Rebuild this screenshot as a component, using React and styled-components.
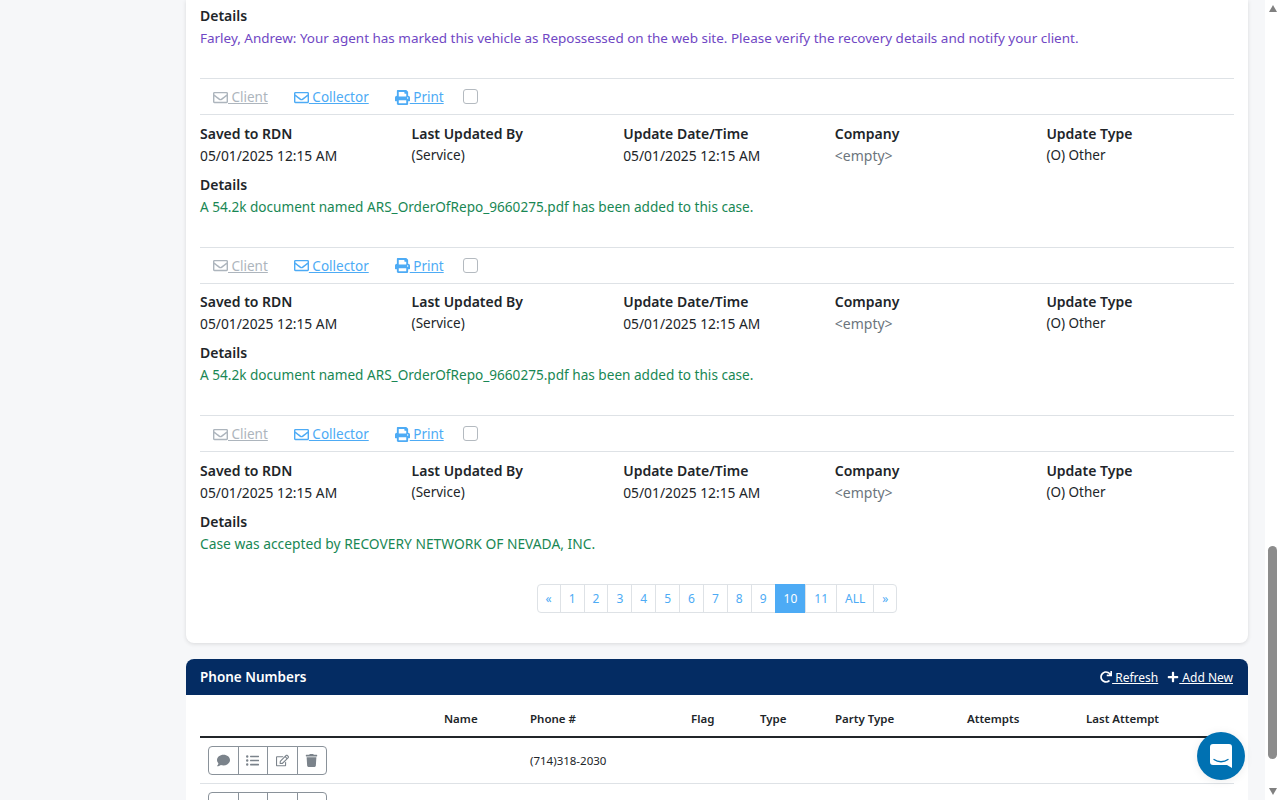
import styled, { createGlobalStyle } from "styled-components";
import {
  FaRegEnvelope,
  FaPrint,
  FaComment,
  FaListUl,
  FaRegEdit,
  FaTrash,
  FaRedo,
  FaPlus,
} from "react-icons/fa";

const GlobalStyle = createGlobalStyle`
  html, body {
    margin: 0;
    height: 100%;
    overflow: hidden;
    background: #f6f7f9;
    font-family: "Noto Sans", "Open Sans", sans-serif;
    font-size: 13.5px;
    color: #212529;
  }
`;

const Page = styled.div`
  display: flex;
  height: 800px;
  overflow: hidden;
`;

const Main = styled.main`
  width: 1062px;
  margin-left: 186px;
`;

const Card = styled.section`
  background: #fff;
  border-radius: 0 0 8px 8px;
  box-shadow: 0 1px 4px rgba(0, 0, 0, 0.12);
  padding: 0 14px;
  height: 643px;
  box-sizing: border-box;
`;

const Note = styled.div`
  height: ${(p) => p.$height}px;
  box-sizing: border-box;
`;

const Label = styled.div`
  font-size: 14px;
  font-weight: 600;
  line-height: 20px;
  margin-bottom: 1px;
`;

const Detail = styled.div`
  line-height: ${(p) => p.$lead || 21}px;
  font-size: ${(p) => p.$size || 13.5}px;
  color: ${(p) => p.$color};
`;

const DetailBlock = styled.div`
  padding-top: ${(p) => p.$top}px;
`;

const Actions = styled.div`
  display: flex;
  align-items: center;
  height: 35px;
  border-top: 1px solid #dee2e6;
  border-bottom: 1px solid #dee2e6;
  padding-left: 13px;
`;

const ActionLink = styled.a`
  display: inline-flex;
  align-items: center;
  padding-top: 1px;
  color: ${(p) => (p.$muted ? "#adb5bd" : "#4dabf5")};
  text-decoration: underline;
  margin-right: ${(p) => p.$gap}px;
  white-space: pre;
  svg {
    font-size: 15px;
  }
`;

const Check = styled.span`
  width: 15px;
  height: 15px;
  box-sizing: border-box;
  border: 1px solid #b4bac0;
  border-radius: 3px;
`;

const Fields = styled.div`
  display: grid;
  grid-template-columns: repeat(5, 211.6px);
  padding-top: 8.5px;
`;

const Muted = styled.div`
  line-height: 21px;
  font-size: 14px;
  color: #6c757d;
`;

const Pager = styled.nav`
  display: flex;
  justify-content: center;
  padding-left: 1px;
`;

const PageItem = styled.a`
  height: 29px;
  box-sizing: border-box;
  padding: 0 8px;
  display: flex;
  align-items: center;
  font-size: 12px;
  border: 1px solid #dee2e6;
  margin-left: -1px;
  color: ${(p) => (p.$active ? "#fff" : "#4dabf5")};
  background: ${(p) => (p.$active ? "#4dabf5" : "#fff")};
  border-color: ${(p) => (p.$active ? "#4dabf5" : "#dee2e6")};
  &:first-child {
    border-radius: 4px 0 0 4px;
  }
  &:last-child {
    border-radius: 0 4px 4px 0;
  }
`;

const Panel = styled.section`
  margin-top: 16px;
  background: #fff;
  border-radius: 8px 8px 0 0;
`;

const PanelHead = styled.header`
  height: 36px;
  background: #042c63;
  color: #fff;
  border-radius: 8px 8px 0 0;
  display: flex;
  align-items: center;
  justify-content: space-between;
  padding: 0 15px 0 14px;
`;

const PanelTitle = styled.h2`
  margin: 0;
  font-size: 13.5px;
  font-weight: 600;
`;

const HeadLinks = styled.div`
  display: flex;
  gap: 9px;
`;

const HeadLink = styled.a`
  display: inline-flex;
  align-items: center;
  color: #fff;
  text-decoration: underline;
  white-space: pre;
  font-size: 12px;
  svg {
    font-size: 12px;
  }
`;

const TableWrap = styled.div`
  padding: 0 14px;
`;

const Table = styled.table`
  width: 1034px;
  border-collapse: collapse;
  table-layout: fixed;
  font-size: 11.5px;
  th {
    height: 42px;
    text-align: left;
    font-weight: 600;
    padding: 5px 0 0;
    box-sizing: border-box;
    border-bottom: 2px solid #212529;
  }
  td {
    height: 45px;
    padding: 0;
    border-bottom: 1px solid #dee2e6;
  }
`;

const BtnGroup = styled.div`
  display: inline-flex;
  margin-left: 8px;
  vertical-align: middle;
`;

const IconBtn = styled.button`
  width: 30.5px;
  height: 29px;
  padding: 0;
  background: #fff;
  border: 1px solid #8a929a;
  margin-left: -1px;
  color: #7b838b;
  display: flex;
  align-items: center;
  justify-content: center;
  font-size: 13px;
  &:first-child {
    border-radius: 4px 0 0 4px;
    margin-left: 0;
  }
  &:last-child {
    border-radius: 0 4px 4px 0;
  }
`;

const ScrollBar = styled.aside`
  width: 15px;
  margin-left: 17px;
  background: #fff;
  display: flex;
  flex-direction: column;
  align-items: center;
  height: 800px;
`;

const Arrow = styled.span`
  width: 0;
  height: 0;
  margin: 5px 0;
  border-left: 4.5px solid transparent;
  border-right: 4.5px solid transparent;
  border-${(p) => (p.$up ? "bottom" : "top")}: 7px solid #808080;
`;

const Track = styled.div`
  flex: 1;
  width: 100%;
  display: flex;
  flex-direction: column;
  justify-content: flex-end;
  align-items: center;
`;

const Thumb = styled.div`
  width: 9px;
  height: 213px;
  background: #8c8c8c;
  border-radius: 5px;
  margin-bottom: 24px;
`;

const Launcher = styled.div`
  position: fixed;
  left: 1197px;
  top: 732px;
  width: 48px;
  height: 48px;
  border-radius: 50%;
  background: #0071b2;
  box-shadow: 0 1px 10px rgba(0, 0, 0, 0.08);
  display: flex;
  align-items: center;
  justify-content: center;
`;

const notes = [
  { text: "A 54.2k document named ARS_OrderOfRepo_9660275.pdf has been added to this case.", size: 13.6 },
  { text: "A 54.2k document named ARS_OrderOfRepo_9660275.pdf has been added to this case.", size: 13.6 },
  { text: "Case was accepted by RECOVERY NETWORK OF NEVADA, INC.", size: 13.8 },
];

const columns = ["Name", "Phone #", "Flag", "Type", "Party Type", "Attempts", "Last Attempt"];

function NoteRow({ text, size }) {
  return (
    <Note $height={168.5}>
      <Actions>
        <ActionLink $muted $gap={26}>
          <FaRegEnvelope /> Client
        </ActionLink>
        <ActionLink $gap={26}>
          <FaRegEnvelope /> Collector
        </ActionLink>
        <ActionLink $gap={19}>
          <FaPrint /> Print
        </ActionLink>
        <Check />
      </Actions>
      <Fields>
        <div>
          <Label>Saved to RDN</Label>
          <Detail $size={13.8}>05/01/2025 12:15 AM</Detail>
        </div>
        <div>
          <Label>Last Updated By</Label>
          <Detail>(Service)</Detail>
        </div>
        <div>
          <Label>Update Date/Time</Label>
          <Detail $size={13.8}>05/01/2025 12:15 AM</Detail>
        </div>
        <div>
          <Label>Company</Label>
          <Muted>&lt;empty&gt;</Muted>
        </div>
        <div>
          <Label>Update Type</Label>
          <Detail>(O) Other</Detail>
        </div>
      </Fields>
      <DetailBlock $top={9}>
        <Label>Details</Label>
        <Detail $color="#198754" $size={size}>{text}</Detail>
      </DetailBlock>
    </Note>
  );
}

function ButtonRow() {
  return (
    <BtnGroup>
      <IconBtn><FaComment /></IconBtn>
      <IconBtn><FaListUl /></IconBtn>
      <IconBtn><FaRegEdit /></IconBtn>
      <IconBtn><FaTrash /></IconBtn>
    </BtnGroup>
  );
}

export default function App() {
  return (
    <Page>
      <GlobalStyle />
      <Main>
        <Card>
          <Note $height={78}>
            <DetailBlock $top={6}>
              <Label>Details</Label>
              <Detail $color="#7047c4" $size={13.47} $lead={23}>
                Farley, Andrew: Your agent has marked this vehicle as Repossessed on the web site. Please verify the recovery details and notify your client.
              </Detail>
            </DetailBlock>
          </Note>
          {notes.map((n, i) => (
            <NoteRow key={i} text={n.text} size={n.size} />
          ))}
          <Pager>
            <PageItem>«</PageItem>
            {[1, 2, 3, 4, 5, 6, 7, 8, 9].map((n) => (
              <PageItem key={n}>{n}</PageItem>
            ))}
            <PageItem $active>10</PageItem>
            <PageItem>11</PageItem>
            <PageItem>ALL</PageItem>
            <PageItem>»</PageItem>
          </Pager>
        </Card>
        <Panel>
          <PanelHead>
            <PanelTitle>Phone Numbers</PanelTitle>
            <HeadLinks>
              <HeadLink><FaRedo /> Refresh</HeadLink>
              <HeadLink><FaPlus /> Add New</HeadLink>
            </HeadLinks>
          </PanelHead>
          <TableWrap>
            <Table>
              <colgroup>
                <col width="244" />
                <col width="86" />
                <col width="161" />
                <col width="69" />
                <col width="75" />
                <col width="132" />
                <col width="119" />
                <col width="148" />
              </colgroup>
              <thead>
                <tr>
                  <th />
                  {columns.map((c) => (
                    <th key={c}>{c}</th>
                  ))}
                </tr>
              </thead>
              <tbody>
                <tr>
                  <td><ButtonRow /></td>
                  <td />
                  <td>(714)318-2030</td>
                  <td /><td /><td /><td /><td />
                </tr>
                <tr>
                  <td><ButtonRow /></td>
                  <td /><td /><td /><td /><td /><td /><td />
                </tr>
              </tbody>
            </Table>
          </TableWrap>
        </Panel>
      </Main>
      <ScrollBar>
        <Arrow $up />
        <Track>
          <Thumb />
        </Track>
        <Arrow />
      </ScrollBar>
      <Launcher>
        <svg width="22" height="24" viewBox="0 0 22 24">
          <path d="M3 0h16a3 3 0 0 1 3 3v21l-5-3H3a3 3 0 0 1-3-3V3a3 3 0 0 1 3-3z" fill="#fff" />
          <path d="M4 15.5c4 3 10 3 14 0" fill="none" stroke="#0071b2" strokeWidth="1.3" strokeLinecap="round" />
        </svg>
      </Launcher>
    </Page>
  );
}
